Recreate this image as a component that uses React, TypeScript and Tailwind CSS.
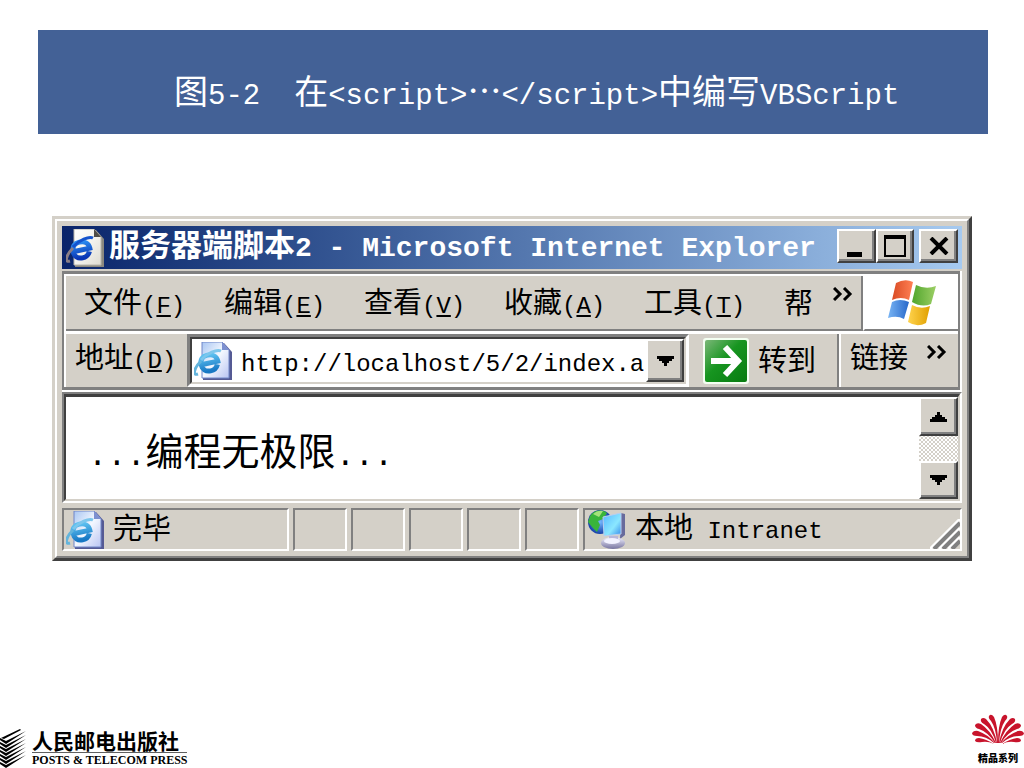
import React from 'react';

const menus = [
  { label: '文件', hotkey: 'F' },
  { label: '编辑', hotkey: 'E' },
  { label: '查看', hotkey: 'V' },
  { label: '收藏', hotkey: 'A' },
  { label: '工具', hotkey: 'T' },
];

// Left half of the fan, mirrored for the right half
const petals = [
  'M26 30Q26 13 22 4Q19 0 17 3Q16 5 19 8Q24 15 25 30z',
  'M25 30Q22 14 14 6Q11 4 9 6Q8 9 12 11Q20 16 24 30z',
  'M24 30Q18 17 9 11Q5 9 3 12Q3 15 7 16Q16 19 23 30z',
  'M23 30Q15 21 6 18Q2 17 0 20Q0 23 5 23Q14 23 22 30z',
  'M22 31Q14 26 7 25Q3 25 3 28Q5 30 10 29Q16 28 22 31z',
];

const mono = "font-['Liberation_Mono','Noto_Sans_CJK_SC',monospace]";
const raised =
  'bg-[#d4d0c8] border-t-2 border-l-2 border-r-2 border-b-2 border-t-white border-l-white border-r-[#404040] border-b-[#404040] shadow-[inset_-2px_-2px_0_#808080]';
const sunken = 'border-2 border-t-[#808080] border-l-[#808080] border-r-white border-b-white';

const PageIcon: React.FC<{ id: string; classic?: boolean }> = ({ id, classic = false }) => (
  <svg className="w-[38px] h-[38px] shrink-0" viewBox="0 0 38 38" aria-hidden="true">
    <defs>
      <linearGradient id={`${id}-page`} x1="0" y1="0" x2="1" y2="1">
        <stop offset="0" stopColor={classic ? '#ffffff' : '#a9c6f2'} />
        <stop offset="0.5" stopColor={classic ? '#f4f3ee' : '#f4f8ff'} />
        <stop offset="1" stopColor={classic ? '#dedbd2' : '#b9c4f2'} />
      </linearGradient>
      <linearGradient id={`${id}-e`} x1="0" y1="0" x2="0" y2="1">
        <stop offset="0" stopColor={classic ? '#2b8cf0' : '#5cc0f0'} />
        <stop offset="1" stopColor={classic ? '#0a35b4' : '#1878c4'} />
      </linearGradient>
    </defs>
    <path d="M9 1h21l8 9v28H9z" fill={classic ? '#8b887f' : '#555a94'} />
    <path d="M8 0h20l7 8v28H8z" fill={`url(#${id}-page)`} stroke={classic ? '#b8b5ab' : '#7186c8'} />
    <path d="M28 0v8h7z" fill={classic ? '#4f4d49' : '#7d90d0'} />
    <g transform="rotate(-12 15 21)">
      <path
        d="M23 24c-2 4-5 5-8 5-5 0-8-3-8-8s3-8 8-8c5 0 9 3 9 8H8"
        fill="none"
        stroke={`url(#${id}-e)`}
        strokeWidth="5"
      />
    </g>
    <path d="M4 32C-2 34 0 26 7 19" fill="none" stroke={classic ? '#8b7f86' : '#63b4dc'} strokeWidth="3" />
    <path d="M7 18C13 11 23 7 27 9" fill="none" stroke={classic ? '#1453cd' : '#7cc6ec'} strokeWidth="3" />
  </svg>
);

const WindowsLogo = () => (
  <svg className="w-[48px] h-[46px]" viewBox="0 0 48 46" aria-label="Windows">
    <defs>
      <linearGradient id="flagRed"><stop stopColor="#d94b24" /><stop offset="1" stopColor="#ff8054" /></linearGradient>
      <linearGradient id="flagGreen"><stop stopColor="#50a52c" /><stop offset="1" stopColor="#9ccf65" /></linearGradient>
      <linearGradient id="flagBlue"><stop stopColor="#78b4f4" /><stop offset="1" stopColor="#2868ca" /></linearGradient>
      <linearGradient id="flagYellow"><stop stopColor="#ffd34d" /><stop offset="1" stopColor="#e0a000" /></linearGradient>
    </defs>
    <path d="M8 3q9-5 17-1l-4 18q-8-4-17 0z" fill="url(#flagRed)" />
    <path d="M28 5q10 5 20 1l-5 18q-9 4-19-2z" fill="url(#flagGreen)" />
    <path d="M4 22q8-4 17 0l-5 17q-7-4-16-1z" fill="url(#flagBlue)" />
    <path d="M24 25q9 5 18 1l-4 17q-9 5-18-1z" fill="url(#flagYellow)" />
  </svg>
);

const GoIcon = () => (
  <svg className="w-[46px] h-[46px] shrink-0" viewBox="0 0 46 46" aria-hidden="true">
    <defs>
      <linearGradient id="go" x1="0" y1="0" x2="1" y2="1">
        <stop stopColor="#7bb878" />
        <stop offset="0.45" stopColor="#179520" />
        <stop offset="1" stopColor="#087b10" />
      </linearGradient>
    </defs>
    <rect width="46" height="46" rx="3" fill="#f4fff2" />
    <rect x="2" y="2" width="42" height="42" rx="2" fill="url(#go)" />
    <path d="M8 23h27M22 9l13 14-13 14" fill="none" stroke="#fff" strokeWidth="6" />
  </svg>
);

const NetworkIcon = () => (
  <svg className="w-[39px] h-[40px] shrink-0" viewBox="0 0 39 40" aria-hidden="true">
    <defs>
      <radialGradient id="globe"><stop stopColor="#75b9ff" /><stop offset="1" stopColor="#1641a8" /></radialGradient>
      <linearGradient id="screen" x2="1" y2="1"><stop stopColor="#55b7ff" /><stop offset="0.6" stopColor="#8be7ff" /><stop offset="1" stopColor="#3489e9" /></linearGradient>
      <linearGradient id="base" y2="1" x2="0"><stop stopColor="#f1f1ff" /><stop offset="1" stopColor="#7774a0" /></linearGradient>
    </defs>
    <circle cx="13" cy="12" r="12" fill="url(#globe)" />
    <path d="M3 6c4-6 12-7 17-3l-4 6-5 2 2 4-3 7-5-5-4-5z" fill="#39b53b" />
    <path d="M6 4c3-3 7-4 10-3l-4 6z" fill="#a4e27b" />
    <path d="M34 3l4 1v21l-5 4z" fill="#686b9c" />
    <path d="M16 7l18-4v21l-17 2z" fill="url(#screen)" stroke="#b9cef0" />
    <ellipse cx="26" cy="33" rx="12" ry="6" fill="url(#base)" />
    <path d="M22 26h9v5h-9z" fill="#b8b7da" />
    <ellipse cx="25" cy="31" rx="8" ry="3" fill="#f2f2ff" />
  </svg>
);

const Chevrons = () => (
  <svg className="w-[20px] h-[14px]" viewBox="0 0 20 14" aria-hidden="true">
    <path d="M1 1l6 6-6 6M11 1l6 6-6 6" fill="none" stroke="#000" strokeWidth="3" />
  </svg>
);

const Triangle: React.FC<{ up?: boolean }> = ({ up = false }) => (
  <svg className="w-[17px] h-[10px]" viewBox="0 0 17 10" shapeRendering="crispEdges" aria-hidden="true">
    <path d={up ? 'M7 0h3v3h2v2h3v2h2v3H0V7h2V5h3V3h2z' : 'M0 0h17v3h-2v2h-3v2h-2v3H7V7H5V5H2V3H0z'} />
  </svg>
);

const TitleBar = () => (
  <div className="flex items-center h-[43px] pl-1 pr-1 bg-linear-to-r from-[#0a246a] to-[#a6caf0]">
    <PageIcon id="title" classic />
    <h2 className={`${mono} flex-1 min-w-0 pt-[2px] ml-[5px] text-[28px] leading-[36px] font-bold text-white whitespace-nowrap`}>
      <span className="text-[31px]">服务器端脚本</span>2 - Microsoft Internet Explorer
    </h2>
    <div className="flex shrink-0 mb-1">
      <button aria-label="最小化" className={`${raised} w-[39px] h-[34px] flex items-end pl-2 pb-1`}>
        <span className="w-[15px] h-[5px] bg-black" />
      </button>
      <button aria-label="最大化" className={`${raised} w-[38px] h-[34px] flex items-center justify-center`}>
        <span className="w-[22px] h-[22px] border-2 border-t-4 border-black" />
      </button>
      <button aria-label="关闭" className={`${raised} ml-[5px] w-[39px] h-[34px] flex items-center justify-center`}>
        <svg className="w-[20px] h-[18px]" viewBox="0 0 20 18">
          <path d="M2 1l16 16M18 1L2 17" stroke="#000" strokeWidth="4" />
        </svg>
      </button>
    </div>
  </div>
);

const Toolbars = () => (
  <div className="mt-[2px] border-r-2 border-b-2 border-white">
    <div className="border-2 border-t-[3px] border-b-[3px] border-[#808080]">
      <div className="flex h-[57px] border-t-2 border-l-2 border-white">
        <nav className="flex flex-1 min-w-0 items-center pt-2 pl-[18px] pr-2 border-r-2 border-b-2 border-[#808080]">
          {menus.map((menu) => (
            <button key={menu.hotkey} className={`${mono} w-[140px] shrink-0 text-left text-[24px] leading-[36px] whitespace-nowrap`}>
              <span className="text-[29px]">{menu.label}</span>(<span className="underline">{menu.hotkey}</span>)
            </button>
          ))}
          <button className={`${mono} text-[29px] leading-[36px]`}>帮</button>
          <button aria-label="更多菜单" className="ml-auto self-start mt-[3px]">
            <Chevrons />
          </button>
        </nav>
        <div className="flex items-center justify-center w-[95px] bg-white border-l-2 border-b-2 border-l-white border-b-[#808080]">
          <WindowsLogo />
        </div>
      </div>

      <div className="flex h-[56px] border-t-[3px] border-l-2 border-white">
        <label htmlFor="address" className={`${mono} w-[121px] pl-[9px] pt-[9px] text-[24px] leading-[36px] whitespace-nowrap`}>
          <span className="text-[29px]">地址</span>(<span className="underline">D</span>)
        </label>
        <div className="flex flex-1 min-w-0 border-[3px] border-t-[#808080] border-l-[#808080] border-r-white border-b-white">
          <div className="flex flex-1 min-w-0 items-center pl-[2px] bg-white border-2 border-t-[#404040] border-l-[#404040] border-r-[#d4d0c8] border-b-[#d4d0c8]">
            <PageIcon id="address" />
            <input
              id="address"
              type="text"
              defaultValue="http://localhost/5/2/index.asp"
              className={`${mono} flex-1 min-w-0 ml-[9px] pt-2 text-[24px] leading-[32px] bg-transparent outline-none`}
            />
            <button aria-label="地址列表" className={`${raised} w-[38px] self-stretch shrink-0 flex items-center justify-center`}>
              <Triangle />
            </button>
          </div>
        </div>
        <button className={`${mono} flex items-center w-[148px] gap-[9px] pl-[14px] text-[29px] leading-[36px] whitespace-nowrap`}>
          <GoIcon />
          <span className="pt-[6px]">转到</span>
        </button>
        <button aria-label="链接" className={`${mono} flex w-[121px] border-l-2 border-[#808080] text-[29px] leading-[36px] whitespace-nowrap`}>
          <span className="self-stretch border-l-2 border-white pl-[9px] pt-[9px]">链接</span>
          <span className="ml-[19px] mt-[11px]">
            <Chevrons />
          </span>
        </button>
      </div>
    </div>
  </div>
);

const PageView = () => (
  <div className={sunken}>
    <div className="flex h-[107px] bg-white border-2 border-t-[3px] border-t-[#404040] border-l-[#404040] border-r-[#d4d0c8] border-b-[#d4d0c8]">
      <p className={`${mono} flex-1 min-w-0 pl-[22px] pt-[34px] text-[32px] leading-[48px] whitespace-nowrap`}>
        ...<span className="text-[38px]">编程无极限</span>...
      </p>
      <div className="flex flex-col justify-between w-[39px] bg-[repeating-conic-gradient(#d4d0c8_0_25%,#fff_0_50%)] bg-size-[4px_4px]">
        <button aria-label="向上滚动" className={`${raised} h-[39px] flex items-center justify-center`}>
          <Triangle up />
        </button>
        <button aria-label="向下滚动" className={`${raised} h-[38px] flex items-center justify-center`}>
          <Triangle />
        </button>
      </div>
    </div>
  </div>
);

const StatusBar = () => (
  <div className={`${mono} flex gap-1 h-[43px] mt-[5px] text-[24px] leading-[36px] whitespace-nowrap`}>
    <div className={`${sunken} flex items-center gap-[9px] w-[227px] pl-[2px]`}>
      <PageIcon id="status" />
      <span className="pt-1 text-[29px]">完毕</span>
    </div>
    {[0, 1, 2, 3, 4].map((i) => (
      <div key={i} className={`${sunken} w-[54px]`} />
    ))}
    <div className={`${sunken} flex flex-1 min-w-0 items-center pl-[2px]`}>
      <NetworkIcon />
      <span className="pt-1 ml-[9px]">
        <span className="text-[29px]">本地</span> Intranet
      </span>
      <svg className="w-[30px] h-[30px] ml-auto self-end" viewBox="0 0 30 30" aria-hidden="true">
        <path d="M0 30L30 0M9 30L30 9M18 30L30 18" stroke="#fff" strokeWidth="3" />
        <path d="M4 30L30 4M13 30L30 13M22 30l8-8" stroke="#808080" strokeWidth="4" />
      </svg>
    </div>
  </div>
);

const PublisherLogo = () => (
  <div className="flex items-start">
    <svg className="w-[27px] h-[39px]" viewBox="0 0 27 39" aria-hidden="true">
      <path d="M1 9L20 0l1 1L4 10z" />
      {[0, 4, 8, 12, 16, 20, 24].map((y) => (
        <path key={y} transform={`translate(0 ${y})`} d="M0 9l6 3L26 2 6 15 0 11z" />
      ))}
    </svg>
    <div className="ml-[5px] whitespace-nowrap">
      <div className="border-b border-[#606060] font-['Noto_Sans_CJK_SC',sans-serif] text-[21px] leading-[23px] font-bold">人民邮电出版社</div>
      <div className="font-['Liberation_Serif',serif] text-[12px] leading-[15px] font-bold">POSTS &amp; TELECOM PRESS</div>
    </div>
  </div>
);

const SeriesLogo = () => (
  <div className="flex flex-col items-center w-[52px]">
    <svg className="w-[52px] h-[32px]" viewBox="0 0 52 32" fill="#c8142c" aria-hidden="true">
      {petals.map((d) => (
        <g key={d}>
          <path d={d} />
          <path d={d} transform="translate(52 0) scale(-1 1)" />
        </g>
      ))}
    </svg>
    <span className="mt-[5px] mb-[2px] font-['Noto_Sans_CJK_SC',sans-serif] text-[10px] leading-[16px] font-black whitespace-nowrap">精品系列</span>
  </div>
);

export default function App() {
  return (
    <div lang="zh-CN" className="flex flex-col min-h-screen bg-white text-black overflow-hidden">
      <header className="mt-[30px] ml-[38px] mr-9 h-[104px] pl-[136px] pt-9 bg-[#436196]">
        <h1 className={`${mono} text-[29px] leading-[48px] text-white whitespace-nowrap`}>
          <span className="text-[34px]">图</span>5-2<span className="text-[34px]">　在</span>&lt;script&gt;
          <span className="text-[34px] font-['Noto_Sans_CJK_SC',sans-serif]">⋯</span>&lt;/script&gt;
          <span className="text-[34px]">中编写</span>VBScript
        </h1>
      </header>

      <main className="mt-[82px] mx-[52px] border-[3px] border-t-[#d4d0c8] border-l-[#d4d0c8] border-r-[#404040] border-b-[#404040]">
        <div className="p-[5px] border-2 border-t-white border-l-white border-r-[#808080] border-b-[#808080] bg-[#d4d0c8]">
          <TitleBar />
          <Toolbars />
          <PageView />
          <StatusBar />
        </div>
      </main>

      <footer className="flex items-end justify-between mt-auto">
        <PublisherLogo />
        <SeriesLogo />
      </footer>
    </div>
  );
}
